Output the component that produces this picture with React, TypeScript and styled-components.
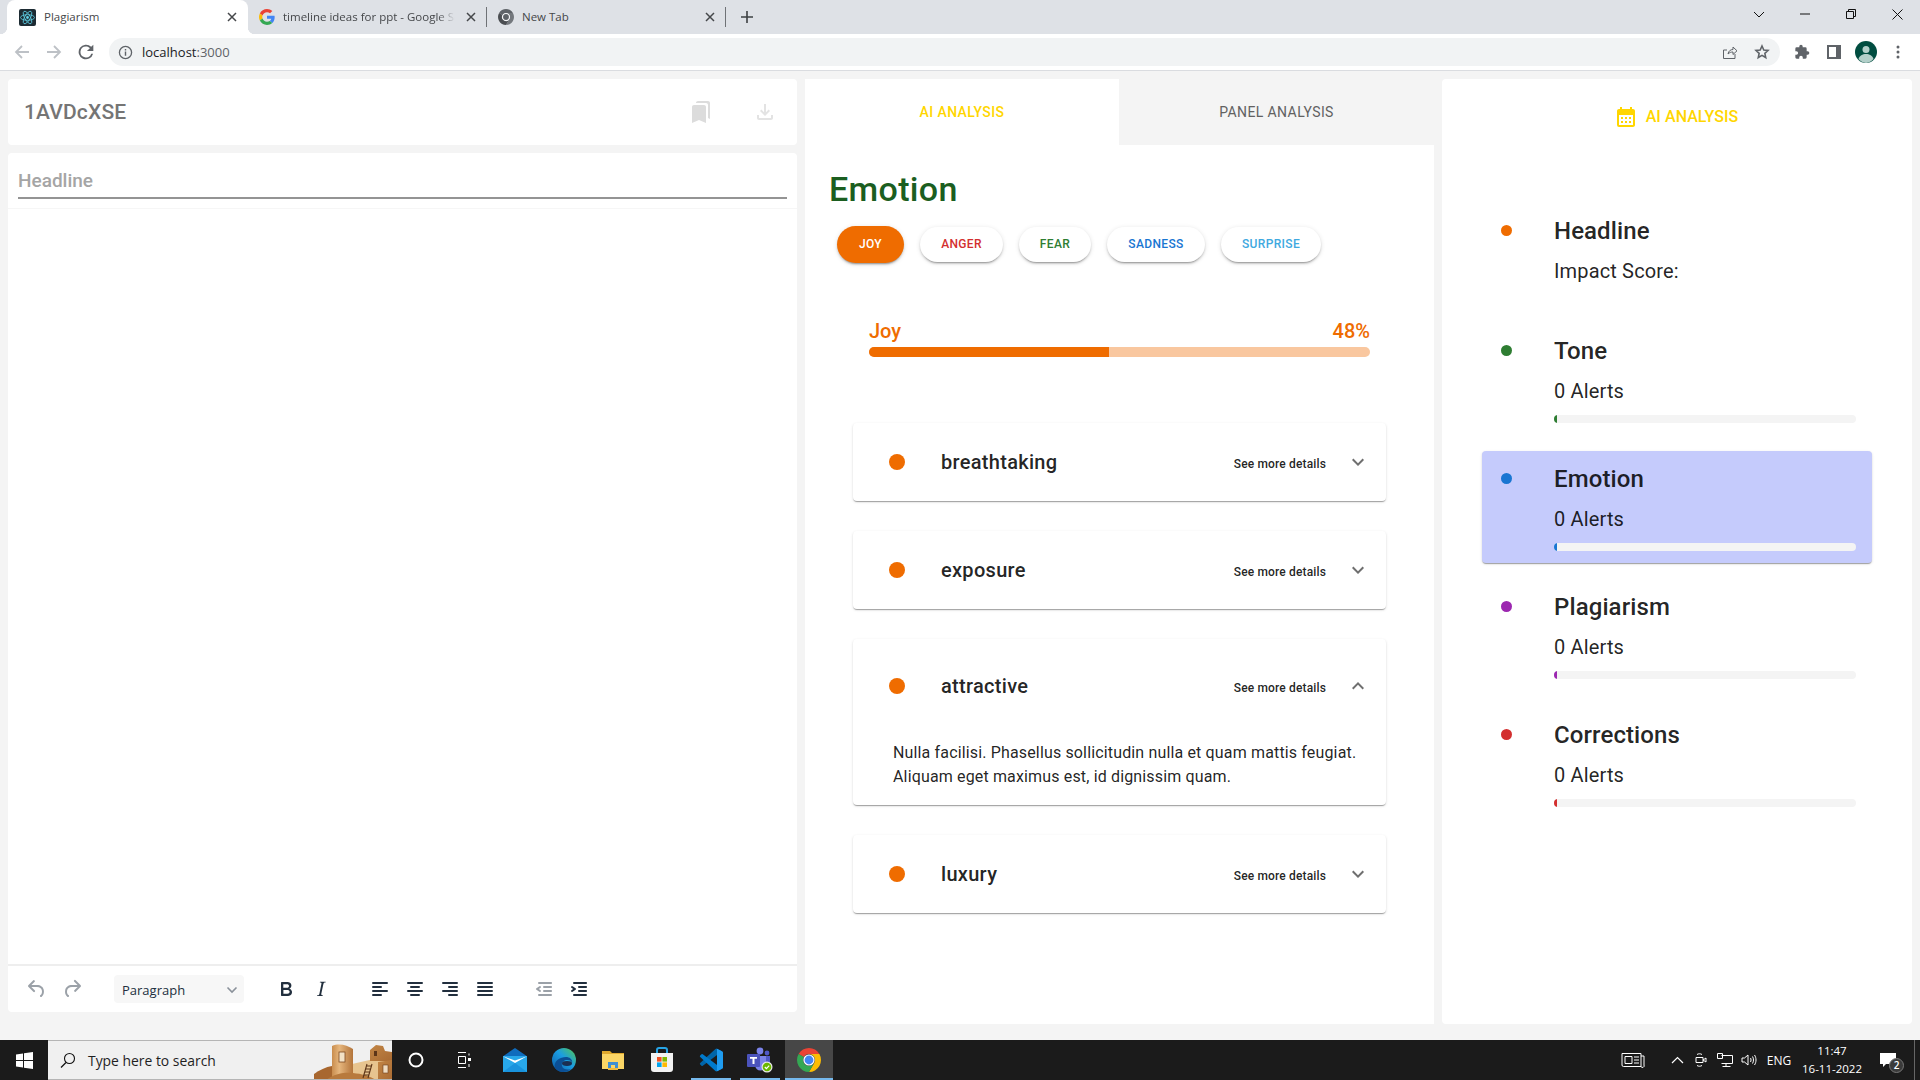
import React from "react";
import styled, { createGlobalStyle } from "styled-components";
import { MdCalendarMonth, MdBookmarks, MdOutlineFileDownload, MdExpandMore, MdExpandLess } from "react-icons/md";

const Global = createGlobalStyle`
  html, body { margin: 0; padding: 0; overflow: hidden; background: #f4f4f4; }
  body { font-family: Roboto, "Liberation Sans", sans-serif; }
  * { box-sizing: border-box; }
  svg { display: block; }
`;

const Page = styled.div`
  width: 1920px; height: 1080px; display: flex; flex-direction: column;
`;

/* browser chrome */
const TabStrip = styled.div`
  height: 34px; flex: none; background: #dee1e6; display: flex; align-items: stretch; padding-left: 7px;
`;
const BrowserTab = styled.div<{ $active?: boolean; $width: number; $sep?: boolean }>`
  width: ${p => p.$width}px; display: flex; align-items: center; gap: 8px;
  padding: 0 8px 0 ${p => (p.$active ? 12 : 11)}px;
  background: ${p => (p.$active ? "#fff" : "transparent")};
  border-radius: ${p => (p.$active ? "8px 8px 0 0" : "0")};
  position: relative;
  &::before {
    content: ""; display: ${p => (p.$active ? "block" : "none")};
    position: absolute; left: -7px; right: -7px; bottom: 0; height: 7px;
    background:
      radial-gradient(circle at 0 0, transparent 7px, #fff 7.5px) left bottom / 7px 7px no-repeat,
      radial-gradient(circle at 100% 0, transparent 7px, #fff 7.5px) right bottom / 7px 7px no-repeat;
  }
  &::after {
    content: ""; display: ${p => (p.$sep ? "block" : "none")};
    position: absolute; right: 0; top: 7px; bottom: 7px; width: 1px; background: #6f7276;
  }
`;
const TabTitle = styled.span<{ $fade?: boolean }>`
  flex: 1; min-width: 0; white-space: nowrap; overflow: hidden; padding-bottom: 2px; line-height: 17px;
  font-family: "Open Sans", sans-serif; font-size: 11.5px; color: #45474a;
  ${p => (p.$fade ? "mask-image: linear-gradient(90deg, #000 90%, transparent 100%);" : "")}
`;
const Glyph = styled.span<{ $size?: number; $color?: string; $mr?: number }>`
  flex: none; width: ${p => p.$size ?? 16}px; height: ${p => p.$size ?? 16}px; margin-right: ${p => p.$mr ?? 0}px;
  display: flex; align-items: center; justify-content: center; color: ${p => p.$color ?? "#45474a"};
`;
const NewTab = styled.div`
  width: 32px; margin-left: 5px; display: flex; align-items: center; justify-content: center; color: #3c4043;
`;
const WindowControls = styled.div`
  margin-left: auto; display: flex; align-items: stretch;
`;
const WindowButton = styled.div`
  width: 46px; display: flex; align-items: center; justify-content: center; color: #111;
  padding-bottom: 6px;
`;
const Toolbar = styled.div`
  height: 37px; flex: none; background: #fff; border-bottom: 1px solid #dadce0;
  display: flex; align-items: center; padding: 0 6px;
`;
const ToolButton = styled.div<{ $color?: string }>`
  width: 32px; height: 28px; flex: none; display: flex; align-items: center; justify-content: center;
  color: ${p => p.$color ?? "#5f6368"};
`;
const Omnibox = styled.div`
  flex: 1; height: 28px; margin: 0 6px 0 7px; border-radius: 14px; background: #f1f3f4;
  display: flex; align-items: center; padding: 0 2px 0 8px;
`;
const Url = styled.div`
  flex: 1; font: 400 13px "Open Sans", sans-serif; color: #202124;
  span { color: #5f6368; }
`;

/* workspace */
const Workspace = styled.main`
  flex: 1; min-height: 0; display: grid; grid-template-columns: 789px 629px 470px; column-gap: 8px;
  padding: 8px 8px 0; background: #f4f4f4; align-items: start;
`;
const LeftColumn = styled.section`
  height: 933px; display: flex; flex-direction: column; gap: 8px;
`;
const DocHeader = styled.header`
  height: 66px; flex: none; background: #fff; border-radius: 4px; display: flex; align-items: center;
  padding: 0 20px 0 16px;
`;
const DocTitle = styled.h1`
  margin: 1px 0 0; flex: 1; font: 500 21px/1.2 Roboto, sans-serif; letter-spacing: .15px; color: #757575;
`;
const DocAction = styled.div<{ $color: string; $gap: number }>`
  color: ${p => p.$color}; margin-left: ${p => p.$gap}px; display: flex; font-size: 24px;
`;
const EditorCard = styled.div`
  flex: 1; min-height: 0; background: #fff; border-radius: 4px; display: flex; flex-direction: column;
`;
const HeadlineWrap = styled.div`
  height: 55px; flex: none; padding: 14px 10px 0;
`;
const HeadlineField = styled.div`
  font: 500 19px/27px Roboto, sans-serif; color: #a5a5a5; padding-bottom: 3px; border-bottom: 2px solid #949494;
`;
const EditorBody = styled.div`
  flex: 1; border-top: 1px solid #f6f6f6;
`;
const EditorToolbar = styled.div`
  height: 48px; flex: none; border-top: 2px solid #eeeeee; display: flex; align-items: center; padding: 0 0 0 17px;
`;
const EditorGroup = styled.div<{ $ml?: number; $gap?: number }>`
  display: flex; align-items: center; gap: ${p => p.$gap ?? 11}px; margin-left: ${p => p.$ml ?? 0}px;
`;
const EditorIcon = styled.div<{ $off?: boolean }>`
  width: 24px; height: 24px; color: ${p => (p.$off ? "rgba(34,47,62,.45)" : "#222f3e")};
`;
const FormatSelect = styled.div`
  width: 130px; height: 28px; margin-left: 30px; border-radius: 4px; background: #f7f7f7; color: #222f3e;
  display: flex; align-items: center; justify-content: space-between; padding: 1px 6px 0 8px;
  font: 400 13px "Open Sans", sans-serif;
`;

const MiddleColumn = styled.section`
  height: 945px; background: #fff; display: flex; flex-direction: column;
`;
const PanelTabs = styled.div`
  height: 66px; flex: none; display: grid; grid-template-columns: 314px 315px;
`;
const PanelTab = styled.div<{ $active?: boolean }>`
  display: flex; align-items: center; justify-content: center; padding-bottom: 1px;
  font: ${p => (p.$active ? 500 : 400)} 14px Roboto, sans-serif; letter-spacing: .4px;
  color: ${p => (p.$active ? "#ffd600" : "#616161")};
  background: ${p => (p.$active ? "#fff" : "#f4f4f4")};
`;
const EmotionTitle = styled.h2`
  margin: 23px 0 16px 24px; font: 500 34px/42px Roboto, sans-serif; letter-spacing: .35px; color: #1b5e20;
`;
const ChipRow = styled.div`
  display: flex; align-items: center; gap: 16px; padding-left: 32px; height: 37px;
`;
const Chip = styled.div<{ $color: string; $active?: boolean; $width: number }>`
  width: ${p => p.$width}px; height: ${p => (p.$active ? 37 : 35)}px; border-radius: 19px;
  display: flex; align-items: center; justify-content: center; padding-bottom: 1px;
  font: 500 12px Roboto, sans-serif; letter-spacing: .35px;
  color: ${p => (p.$active ? "#fff" : p.$color)}; background: ${p => (p.$active ? p.$color : "#fff")};
  box-shadow: 0 3px 1px -2px rgba(0,0,0,.2), 0 2px 2px 0 rgba(0,0,0,.14), 0 1px 5px 0 rgba(0,0,0,.12);
`;
const Meter = styled.div`
  margin: 56px 64px 0;
`;
const MeterLabels = styled.div`
  display: flex; justify-content: space-between; height: 28px; font: 500 20px/24px Roboto, sans-serif; color: #ef6c00;
`;
const MeterTrack = styled.div`
  height: 10px; border-radius: 5px; background: #f9c79f; overflow: hidden;
`;
const MeterFill = styled.div`
  height: 100%; background: #ef6c00;
`;
const AccordionList = styled.div`
  margin: 66px 48px 0; display: flex; flex-direction: column; gap: 30px;
`;
const Accordion = styled.article`
  background: #fff; border-radius: 4px;
  box-shadow: 0 2px 1px -1px rgba(0,0,0,.2), 0 1px 1px 0 rgba(0,0,0,.14), 0 1px 3px 0 rgba(0,0,0,.12);
`;
const AccordionHead = styled.div<{ $open?: boolean }>`
  height: ${p => (p.$open ? 94 : 78)}px; display: flex; align-items: center; padding: 0 16px 0 36px;
`;
const WordDot = styled.span`
  width: 16px; height: 16px; border-radius: 50%; background: #ef6c00; flex: none; margin-right: 36px;
`;
const WordTitle = styled.div`
  flex: 1; font: 500 20px Roboto, sans-serif; letter-spacing: .3px; color: rgba(0,0,0,.87);
`;
const SeeMore = styled.div`
  font: 500 12px Roboto, sans-serif; letter-spacing: .15px; color: rgba(0,0,0,.87); margin: 3px 20px 0 0;
`;
const Chevron = styled.div`
  font-size: 24px; color: #6f6f6f; display: flex;
`;
const AccordionBody = styled.p`
  margin: 0; padding: 8px 24px 16px 40px; font: 400 16px/24px Roboto, sans-serif; letter-spacing: .15px; color: rgba(0,0,0,.87);
`;

const RightColumn = styled.aside`
  height: 945px; background: #fff; border-radius: 4px; padding: 26px 40px 0; display: flex; flex-direction: column;
`;
const SummaryHead = styled.div`
  height: 98px; flex: none; display: flex; justify-content: center; gap: 8px; padding-right: 2px;
  font: 500 16px/24px Roboto, sans-serif; letter-spacing: .05px; color: #ffd600;
  svg { font-size: 24px; }
`;
const SummaryList = styled.div`
  display: flex; flex-direction: column; gap: 16px;
`;
const SummaryItem = styled.div<{ $active?: boolean }>`
  display: flex; align-items: flex-start; gap: 42px; padding: 12px 16px 12px 19px; border-radius: 4px;
  min-height: 104px;
  background: ${p => (p.$active ? "#c5cbfc" : "transparent")};
  box-shadow: ${p => (p.$active ? "0 2px 1px -1px rgba(0,0,0,.2), 0 1px 1px 0 rgba(0,0,0,.14), 0 1px 3px 0 rgba(0,0,0,.12)" : "none")};
`;
const SummaryDot = styled.span<{ $color: string }>`
  width: 11px; height: 11px; border-radius: 50%; flex: none; margin-top: 10px; background: ${p => p.$color};
`;
const SummaryText = styled.div`
  flex: 1; min-width: 0;
`;
const SummaryTitle = styled.div`
  font: 500 24px/32px Roboto, sans-serif; letter-spacing: .1px; color: rgba(0,0,0,.87);
`;
const SummarySub = styled.div`
  margin-top: 8px; font: 400 20px/32px Roboto, sans-serif; letter-spacing: .15px; color: rgba(0,0,0,.87);
`;
const AlertBar = styled.div`
  margin-top: 8px; height: 8px; border-radius: 4px; background: #f4f4f4; overflow: hidden;
`;
const AlertFill = styled.div<{ $color: string }>`
  width: 3px; height: 100%; background: ${p => p.$color};
`;

/* taskbar */
const Taskbar = styled.footer`
  height: 40px; flex: none; background: #1b1b1b; display: flex; align-items: stretch; position: relative;
`;
const StartButton = styled.div`
  width: 48px; display: flex; align-items: center; justify-content: center;
`;
const SearchBox = styled.div`
  width: 344px; background: #f0f0f0; border-top: 1px solid #b5b5b5; border-bottom: 1px solid #b5b5b5;
  display: flex; align-items: center; padding-left: 12px; overflow: hidden;
`;
const SearchText = styled.span`
  margin-left: 12px; font: 400 13.9px "Open Sans", sans-serif; color: #1f1f1f; flex: 1;
`;
const TaskButton = styled.div<{ $mark?: "inset" | "full"; $width?: number; $highlight?: boolean }>`
  width: ${p => p.$width ?? 48}px; display: flex; align-items: center; justify-content: center; position: relative;
  background: ${p => (p.$highlight ? "#474747" : "transparent")};
  &::after {
    content: ""; display: ${p => (p.$mark ? "block" : "none")}; position: absolute; bottom: 0; height: 2px;
    background: #76b9ed; left: ${p => (p.$mark === "inset" ? 4 : 0)}px; right: ${p => (p.$mark === "inset" ? 4 : 0)}px;
  }
`;
const AppRow = styled.div`
  margin-left: 3px; display: flex; gap: 1px;
`;
const Tray = styled.div`
  margin-left: auto; display: flex; align-items: center; height: 100%;
`;
const TrayIcon = styled.div<{ $width: number; $mr?: number }>`
  width: ${p => p.$width}px; margin-right: ${p => p.$mr ?? 0}px; display: flex; justify-content: center; align-items: center;
  color: #fff; font: 400 12px "Open Sans", sans-serif;
`;
const Clock = styled.div`
  width: 70px; text-align: center; color: #fff; font: 400 11.5px/18px "Open Sans", sans-serif;
`;
const NotifyBadge = styled.span`
  position: absolute; right: -8px; bottom: -6px; width: 15px; height: 15px; border-radius: 50%;
  background: #3a3a3a; border: 1px solid #777; color: #fff; font: 600 10px/13px "Open Sans", sans-serif; text-align: center;
`;
const Notify = styled.div`
  position: relative; width: 16px; height: 14px; margin: 0 13px; 
`;
const ShowDesktop = styled.div`
  width: 11px; height: 100%; display: flex; justify-content: center;
  &::before { content: ""; width: 1px; background: #666; }
`;

/* drawings */
const ChromeLogo = ({ size = 24, mono = false }: { size?: number; mono?: boolean }) => (
  <svg width={size} height={size} viewBox="0 0 24 24">
    <path fill={mono ? "#5f6368" : "#ea4335"} d="M22.39 6A12 12 0 0 0 1.61 6L6.8 9A6 6 0 0 1 12 6Z" />
    <path fill={mono ? "#74787d" : "#fbbc04"} d="M22.39 6A12 12 0 0 1 12 24l5.2-9A6 6 0 0 0 12 6Z" />
    <path fill={mono ? "#4b4e52" : "#34a853"} d="M12 24A12 12 0 0 1 1.61 6L6.8 9a6 6 0 0 0 10.4 6Z" />
    <circle cx="12" cy="12" r="5.6" fill="#fff" />
    <circle cx="12" cy="12" r="4.4" fill={mono ? "#5f6368" : "#4285f4"} />
  </svg>
);
const GoogleG = () => (
  <svg width="16" height="16" viewBox="0 0 48 48">
    <path fill="#EA4335" d="M24 9.5c3.54 0 6.71 1.22 9.21 3.6l6.85-6.85C35.9 2.38 30.47 0 24 0 14.62 0 6.51 5.38 2.56 13.22l7.98 6.19C12.43 13.72 17.74 9.5 24 9.5z" />
    <path fill="#4285F4" d="M46.98 24.55c0-1.57-.15-3.09-.38-4.55H24v9.02h12.94c-.58 2.96-2.26 5.48-4.78 7.18l7.73 6c4.51-4.18 7.09-10.36 7.09-17.65z" />
    <path fill="#FBBC05" d="M10.53 28.59c-.48-1.45-.76-2.99-.76-4.59s.27-3.14.76-4.59l-7.98-6.19C.92 16.46 0 20.12 0 24c0 3.88.92 7.54 2.56 10.78l7.97-6.19z" />
    <path fill="#34A853" d="M24 48c6.48 0 11.93-2.13 15.89-5.81l-7.73-6c-2.15 1.45-4.92 2.3-8.16 2.3-6.26 0-11.57-4.22-13.47-9.91l-7.98 6.19C6.51 42.62 14.62 48 24 48z" />
  </svg>
);
const ReactFav = () => (
  <svg width="17" height="17" viewBox="0 0 17 17">
    <rect width="17" height="17" rx="2" fill="#1d2b33" />
    <g fill="none" stroke="#5fd0e6" strokeWidth=".8">
      <ellipse cx="8.5" cy="8.5" rx="7" ry="2.8" />
      <ellipse cx="8.5" cy="8.5" rx="7" ry="2.8" transform="rotate(60 8.5 8.5)" />
      <ellipse cx="8.5" cy="8.5" rx="7" ry="2.8" transform="rotate(120 8.5 8.5)" />
    </g>
    <circle cx="8.5" cy="8.5" r="1.4" fill="#5fd0e6" />
  </svg>
);
const CloseX = ({ color = "currentColor" }: { color?: string }) => (
  <svg width="10" height="10" viewBox="0 0 10 10"><path d="M1 1l8 8M9 1l-8 8" stroke={color} strokeWidth="1.5" /></svg>
);
const ArrowIcon = ({ flip }: { flip?: boolean }) => (
  <svg width="16" height="16" viewBox="0 0 16 16" style={flip ? { transform: "scaleX(-1)" } : undefined}>
    <path d="M15 8H2.500M8 2 2 8l6 6" fill="none" stroke="currentColor" strokeWidth="1.8" />
  </svg>
);
const EI = ({ d }: { d: string }) => (
  <svg width="24" height="24" viewBox="0 0 24 24"><path fill="currentColor" fillRule="evenodd" d={d} /></svg>
);
const bars = (rows: [number, number][]) =>
  rows.map(([x, w], i) => `M${x + 1} ${5 + i * 4}h${w - 2}a1 1 0 0 1 0 2h-${w - 2}a1 1 0 0 1 0-2Z`).join("");

const ICONS = {
  undo: "M6.4 8H12c3.7 0 6.2 2 6.8 5.1.6 2.7-.4 5.6-2.3 6.8a1 1 0 0 1-1-1.8c1.1-.6 1.8-2.7 1.4-4.6-.5-2.1-2.1-3.5-4.9-3.5H6.4l3.3 3.3a1 1 0 1 1-1.4 1.4l-5-5a1 1 0 0 1 0-1.4l5-5a1 1 0 0 1 1.4 1.4L6.4 8Z",
  redo: "M17.6 10H12c-2.8 0-4.4 1.4-4.9 3.5-.4 2 .3 4 1.4 4.6a1 1 0 1 1-1 1.8c-2-1.2-2.9-4.1-2.3-6.8.6-3 3-5.1 6.8-5.1h5.6l-3.3-3.3a1 1 0 1 1 1.4-1.4l5 5a1 1 0 0 1 0 1.4l-5 5a1 1 0 0 1-1.4-1.4l3.3-3.3Z",
  bold: "M7.8 19c-.3 0-.5 0-.6-.2l-.2-.5V5.7c0-.2 0-.4.2-.5l.6-.2h5c1.5 0 2.7.3 3.5 1 .7.6 1.1 1.4 1.1 2.5a3 3 0 0 1-.6 1.9c-.4.6-1 1-1.6 1.2.4.1.9.3 1.3.6s.8.7 1 1.2c.4.4.5 1 .5 1.6 0 1.3-.4 2.3-1.3 3-.8.7-2.1 1-3.8 1H7.8Zm5-8.3c.6 0 1.2-.1 1.6-.5.4-.3.6-.7.6-1.3 0-1.1-.8-1.7-2.3-1.7H9.3v3.5h3.4Zm.5 6c.7 0 1.3-.1 1.7-.4.4-.4.6-.9.6-1.5s-.2-1-.7-1.4c-.4-.3-1-.4-2-.4H9.4v3.8h4Z",
  italic: "M16.7 4.7l-.1.9h-.3c-.6 0-1 0-1.4.3-.3.3-.4.6-.5 1.1l-2.1 9.8v.6c0 .5.4.8 1.4.8h.2l-.2.8H8l.2-.8h.2c1.1 0 1.8-.5 2-1.5l2-9.8.1-.5c0-.6-.4-.8-1.4-.8h-.3l.2-.9h5.8Z",
  left: bars([[4, 16], [4, 10], [4, 16], [4, 10]]),
  center: bars([[4, 16], [7, 10], [4, 16], [7, 10]]),
  right: bars([[4, 16], [10, 10], [4, 16], [10, 10]]),
  justify: bars([[4, 16], [4, 16], [4, 16], [4, 16]]),
  outdent: "M7 5h12c.6 0 1 .4 1 1s-.4 1-1 1H7a1 1 0 1 1 0-2Zm5 4h7c.6 0 1 .4 1 1s-.4 1-1 1h-7a1 1 0 0 1 0-2Zm0 4h7c.6 0 1 .4 1 1s-.4 1-1 1h-7a1 1 0 0 1 0-2Zm-5 4h12a1 1 0 0 1 0 2H7a1 1 0 0 1 0-2Zm1.6-3.8a1 1 0 0 1-1.2 1.6l-3-2a1 1 0 0 1 0-1.6l3-2a1 1 0 0 1 1.2 1.6L6.8 12l1.8 1.2Z",
  indent: "M7 5h12c.6 0 1 .4 1 1s-.4 1-1 1H7a1 1 0 1 1 0-2Zm5 4h7c.6 0 1 .4 1 1s-.4 1-1 1h-7a1 1 0 0 1 0-2Zm0 4h7c.6 0 1 .4 1 1s-.4 1-1 1h-7a1 1 0 0 1 0-2Zm-5 4h12a1 1 0 0 1 0 2H7a1 1 0 0 1 0-2Zm-2.6-3.8L6.2 12l-1.8-1.2a1 1 0 0 1 1.2-1.6l3 2a1 1 0 0 1 0 1.6l-3 2a1 1 0 1 1-1.2-1.6Z",
};

const Pueblo = () => (
  <svg width="78" height="40" viewBox="0 0 78 40" style={{ flex: "none" }}>
    <defs>
      <linearGradient id="tower" x1="0" x2="1" y1="0" y2="0">
        <stop offset="0" stopColor="#c98d4e" /><stop offset=".35" stopColor="#e6b67d" /><stop offset="1" stopColor="#b3743a" />
      </linearGradient>
      <linearGradient id="block" x1="0" x2="1" y1="0" y2="1">
        <stop offset="0" stopColor="#c28545" /><stop offset="1" stopColor="#a96b33" />
      </linearGradient>
    </defs>
    <path fill="#e7c48f" d="M38 24 60 19l18 2v19H38z" />
    <path fill="url(#block)" d="M56 10l6-5 7 1 2 5 7 1v9H56z" />
    <path fill="url(#block)" d="M64 22l14-2v20H64z" />
    <path fill="#a8672f" d="M0 40v-6c5-4 12-7 18-8v14z" />
    <path fill="url(#tower)" d="M18 6c7-3 15-1 21 3v31H18z" />
    <path fill="#b87a3d" d="M12 40c8-6 18-8 27-7 10 1 16 3 23 7z" />
    <rect x="25" y="12" width="6" height="10" fill="#f3e2c6" stroke="#7d4a22" strokeWidth=".8" />
    <rect x="60" y="11" width="3" height="5" fill="#5d3518" />
    <rect x="69" y="25" width="5" height="8" fill="#f0dcc0" stroke="#6e4120" strokeWidth=".6" />
    <path d="M49 38l4-14M54 38l4-14M50 35h5M51 32h5M52 29h5M53 26h5" stroke="#5d3518" strokeWidth="1.1" />
  </svg>
);

const WinLogo = () => (
  <svg width="17" height="17" viewBox="0 0 17 17">
    <path fill="#fff" d="M0 2.4 7 1.4V8H0zM8 1.2 17 0v8H8zM0 9h7v6.6l-7-1zM8 9h9v8l-9-1.2z" />
  </svg>
);
const MailIcon = () => (
  <svg width="24" height="24" viewBox="0 0 24 24">
    <path fill="#0f6cbd" d="M12 0 24 8.2V10H0V8.2z" />
    <rect y="8" width="24" height="16" fill="#28a8ea" />
    <path fill="#fff" d="M0 8.2 12 15 24 8.2 12 12.5z" />
    <path fill="#0f86d3" d="M0 24 12 15 24 24z" opacity=".6" />
  </svg>
);
const EdgeIcon = () => (
  <svg width="24" height="24" viewBox="0 0 24 24">
    <defs>
      <linearGradient id="edge" x1="0" y1="1" x2="1" y2="0"><stop offset="0" stopColor="#0c59a4" /><stop offset=".55" stopColor="#1b9de2" /><stop offset="1" stopColor="#54c94d" /></linearGradient>
    </defs>
    <circle cx="12" cy="12" r="12" fill="url(#edge)" />
    <path fill="#0b4f95" d="M3 20c3 5 12 5 16 1-3 1-8 1-9-3s2-6 5-6 5 1 5 3c1-3-2-6-6-6-7 0-13 5-11 11z" />
    <ellipse cx="15" cy="15.5" rx="5" ry="2.4" fill="#1b2f52" />
  </svg>
);
const FolderIcon = () => (
  <svg width="22" height="22" viewBox="0 0 22 22">
    <path fill="#e0a92e" d="M0 2h8l2 2h12v3H0z" />
    <rect y="5" width="22" height="15" fill="#fbd666" />
    <path fill="#3f8fd2" d="M6 20v-7h10v7h-3v-4H9v4z" />
    <rect x="6" y="19" width="10" height="2" fill="#f0b83a" />
  </svg>
);
const StoreIcon = () => (
  <svg width="24" height="26" viewBox="0 0 24 26">
    <path fill="none" stroke="#27a4e6" strokeWidth="2" d="M7 7V3a2 2 0 0 1 2-2h6a2 2 0 0 1 2 2v4" />
    <path fill="#f2f2f2" d="M1 6h22v16a3 3 0 0 1-3 3H4a3 3 0 0 1-3-3z" />
    <rect x="7" y="10" width="4.6" height="4.6" fill="#f25022" /><rect x="12.4" y="10" width="4.6" height="4.6" fill="#7fba00" />
    <rect x="7" y="15.4" width="4.6" height="4.6" fill="#00a4ef" /><rect x="12.4" y="15.4" width="4.6" height="4.6" fill="#ffb900" />
  </svg>
);
const VsCodeIcon = () => (
  <svg width="24" height="24" viewBox="0 0 24 24">
    <path fill="#0065a9" d="M23 3.3 18 .8a1.4 1.4 0 0 0-1.6.3L1.2 15a1 1 0 0 0 0 1.5l1.3 1.2a1 1 0 0 0 1.3 0L23 3.3z" />
    <path fill="#007acc" d="M23 20.7 18 23.2a1.4 1.4 0 0 1-1.6-.3L1.2 9a1 1 0 0 1 0-1.5l1.3-1.2a1 1 0 0 1 1.3 0L23 20.7z" />
    <path fill="#1f9cf0" d="M18 23.2a1.5 1.5 0 0 1-1.7-.3c.6.6 1.7.2 1.7-.7V1.8c0-.9-1-1.3-1.7-.7.5-.5 1.2-.6 1.7-.3l5 2.4c.6.3 1 .8 1 1.4v14.8c0 .6-.4 1.2-1 1.4z" />
  </svg>
);
const TeamsIcon = () => (
  <svg width="26" height="26" viewBox="0 0 26 26">
    <circle cx="13" cy="4" r="3.4" fill="#7b83eb" /><circle cx="20" cy="6" r="2.4" fill="#5059c9" />
    <path fill="#5059c9" d="M16 9h7v7a3.5 3.5 0 0 1-7 0z" />
    <path fill="#7b83eb" d="M8 9h11v9a5.5 5.5 0 0 1-11 0z" />
    <rect x="0" y="7" width="13" height="13" rx="1" fill="#4b53bc" />
    <path fill="#fff" d="M3 10h7v1.8H7.5V17h-2v-5.2H3z" />
    <circle cx="20" cy="20" r="5.5" fill="#e8e8e8" /><circle cx="20" cy="20" r="4.3" fill="#6bb700" />
    <path d="M17.8 20l1.6 1.6 2.8-3" fill="none" stroke="#fff" strokeWidth="1.2" />
  </svg>
);

const emotions = [
  { label: "JOY", color: "#ef6c00", width: 67, active: true },
  { label: "ANGER", color: "#d32f2f", width: 83 },
  { label: "FEAR", color: "#2e7d32", width: 72 },
  { label: "SADNESS", color: "#1976d2", width: 98 },
  { label: "SURPRISE", color: "#3fa9e0", width: 100 },
];
const words = [
  { word: "breathtaking" },
  { word: "exposure" },
  { word: "attractive", open: true },
  { word: "luxury" },
];
const summary = [
  { title: "Headline", color: "#ef6c00", sub: "Impact Score:", bar: false },
  { title: "Tone", color: "#2e7d32", sub: "0 Alerts", bar: true },
  { title: "Emotion", color: "#1976d2", sub: "0 Alerts", bar: true, active: true },
  { title: "Plagiarism", color: "#9c27b0", sub: "0 Alerts", bar: true },
  { title: "Corrections", color: "#d32f2f", sub: "0 Alerts", bar: true },
];

export default function App() {
  return (
    <Page>
      <Global />
      <TabStrip>
        <BrowserTab $active $width={241}>
          <Glyph $size={17}><ReactFav /></Glyph>
          <TabTitle>Plagiarism</TabTitle>
          <Glyph><CloseX /></Glyph>
        </BrowserTab>
        <BrowserTab $width={239} $sep>
          <Glyph><GoogleG /></Glyph>
          <TabTitle $fade>timeline ideas for ppt - Google Search</TabTitle>
          <Glyph><CloseX /></Glyph>
        </BrowserTab>
        <BrowserTab $width={239} $sep>
          <Glyph><ChromeLogo size={16} mono /></Glyph>
          <TabTitle>New Tab</TabTitle>
          <Glyph><CloseX /></Glyph>
        </BrowserTab>
        <NewTab>
          <svg width="12" height="12" viewBox="0 0 12 12"><path d="M6 0v12M0 6h12" stroke="currentColor" strokeWidth="1.6" /></svg>
        </NewTab>
        <WindowControls>
          <WindowButton><svg width="12" height="7" viewBox="0 0 12 7"><path d="M1 1l5 5 5-5" fill="none" stroke="currentColor" /></svg></WindowButton>
          <WindowButton><svg width="10" height="2" viewBox="0 0 10 2"><path d="M0 1h10" stroke="currentColor" /></svg></WindowButton>
          <WindowButton><svg width="10" height="10" viewBox="0 0 10 10"><path d="M.5 2.5h7v7h-7zM2.5 2.5v-2h7v7h-2" fill="none" stroke="currentColor" /></svg></WindowButton>
          <WindowButton><svg width="11" height="11" viewBox="0 0 11 11"><path d="M.5.5l10 10M10.5.5l-10 10" stroke="currentColor" /></svg></WindowButton>
        </WindowControls>
      </TabStrip>
      <Toolbar>
        <ToolButton $color="#bdc1c6"><ArrowIcon /></ToolButton>
        <ToolButton $color="#bdc1c6"><ArrowIcon flip /></ToolButton>
        <ToolButton>
          <svg width="22" height="22" viewBox="0 0 24 24"><path fill="currentColor" d="M17.65 6.35A8 8 0 1 0 19.73 14h-2.08A6 6 0 1 1 12 6c1.66 0 3.14.69 4.22 1.78L13 11h7V4z" /></svg>
        </ToolButton>
        <Omnibox>
          <Glyph $color="#5f6368" $mr={9}>
            <svg width="15" height="15" viewBox="0 0 16 16"><circle cx="8" cy="8" r="6.5" fill="none" stroke="currentColor" strokeWidth="1.4" /><path d="M8 7v4.5M8 4.3v1.5" stroke="currentColor" strokeWidth="1.5" /></svg>
          </Glyph>
          <Url>localhost<span>:3000</span></Url>
          <ToolButton>
            <svg width="16" height="16" viewBox="0 0 16 16"><path d="M13 10v4.500H1.500V6H5M6 10c.5-3 2.500-4.500 5-4.500V3l4 3.800-4 3.700V8C9 8 7.500 8.500 6 10z" fill="none" stroke="currentColor" /></svg>
          </ToolButton>
          <ToolButton>
            <svg width="16" height="16" viewBox="0 0 24 24"><path fill="none" stroke="currentColor" strokeWidth="2.400" d="M12 3l2.700 6 6.300.7-4.700 4.300 1.300 6.300L12 17l-5.600 3.300L7.700 14 3 9.700 9.300 9z" /></svg>
          </ToolButton>
        </Omnibox>
        <ToolButton>
          <svg width="16" height="16" viewBox="0 0 24 24"><path fill="currentColor" d="M20.500 11H19V7a2 2 0 0 0-2-2h-4V3.500a2.500 2.500 0 0 0-5 0V5H4a2 2 0 0 0-2 2v3.800h1.500a2.700 2.700 0 0 1 0 5.400H2V20a2 2 0 0 0 2 2h3.800v-1.500a2.700 2.700 0 0 1 5.400 0V22H17a2 2 0 0 0 2-2v-4h1.500a2.500 2.500 0 0 0 0-5z" /></svg>
        </ToolButton>
        <ToolButton>
          <svg width="14" height="14" viewBox="0 0 14 14"><path fill="currentColor" fillRule="evenodd" d="M0 0h14v14H0zM2 2v10h7V2z" /></svg>
        </ToolButton>
        <ToolButton>
          <svg width="22" height="22" viewBox="0 0 22 22"><circle cx="11" cy="11" r="11" fill="#004d40" /><circle cx="11" cy="8.500" r="3.500" fill="#b2cfc9" /><path fill="#b2cfc9" d="M3.500 18c1-3.500 4-5 7.500-5s6.500 1.500 7.500 5A11 11 0 0 1 11 22a11 11 0 0 1-7.500-4z" /></svg>
        </ToolButton>
        <ToolButton>
          <svg width="4" height="14" viewBox="0 0 4 14"><circle cx="2" cy="2" r="1.500" fill="currentColor" /><circle cx="2" cy="7" r="1.500" fill="currentColor" /><circle cx="2" cy="12" r="1.500" fill="currentColor" /></svg>
        </ToolButton>
      </Toolbar>

      <Workspace>
        <LeftColumn>
          <DocHeader>
            <DocTitle>1AVDcXSE</DocTitle>
            <DocAction $color="#dcdcdc" $gap={0}><MdBookmarks /></DocAction>
            <DocAction $color="#e3e3e3" $gap={40}><MdOutlineFileDownload /></DocAction>
          </DocHeader>
          <EditorCard>
            <HeadlineWrap><HeadlineField>Headline</HeadlineField></HeadlineWrap>
            <EditorBody />
            <EditorToolbar>
              <EditorGroup $gap={11}>
                <EditorIcon $off><EI d={ICONS.undo} /></EditorIcon>
                <EditorIcon $off><EI d={ICONS.redo} /></EditorIcon>
              </EditorGroup>
              <FormatSelect>
                Paragraph
                <svg width="12" height="8" viewBox="0 0 12 8"><path d="M1.500 1.500 6 6l4.500-4.500" fill="none" stroke="#8a919a" strokeWidth="1.600" /></svg>
              </FormatSelect>
              <EditorGroup $ml={30}>
                <EditorIcon><EI d={ICONS.bold} /></EditorIcon>
                <EditorIcon><EI d={ICONS.italic} /></EditorIcon>
              </EditorGroup>
              <EditorGroup $ml={35}>
                <EditorIcon><EI d={ICONS.left} /></EditorIcon>
                <EditorIcon><EI d={ICONS.center} /></EditorIcon>
                <EditorIcon><EI d={ICONS.right} /></EditorIcon>
                <EditorIcon><EI d={ICONS.justify} /></EditorIcon>
              </EditorGroup>
              <EditorGroup $ml={35}>
                <EditorIcon $off><EI d={ICONS.outdent} /></EditorIcon>
                <EditorIcon><EI d={ICONS.indent} /></EditorIcon>
              </EditorGroup>
            </EditorToolbar>
          </EditorCard>
        </LeftColumn>

        <MiddleColumn>
          <PanelTabs>
            <PanelTab $active>AI ANALYSIS</PanelTab>
            <PanelTab>PANEL ANALYSIS</PanelTab>
          </PanelTabs>
          <EmotionTitle>Emotion</EmotionTitle>
          <ChipRow>
            {emotions.map(e => (
              <Chip key={e.label} $color={e.color} $active={e.active} $width={e.width}>{e.label}</Chip>
            ))}
          </ChipRow>
          <Meter>
            <MeterLabels><span>Joy</span><span>48%</span></MeterLabels>
            <MeterTrack><MeterFill style={{ width: "48%" }} /></MeterTrack>
          </Meter>
          <AccordionList>
            {words.map(w => (
              <Accordion key={w.word}>
                <AccordionHead $open={w.open}>
                  <WordDot />
                  <WordTitle>{w.word}</WordTitle>
                  <SeeMore>See more details</SeeMore>
                  <Chevron>{w.open ? <MdExpandLess /> : <MdExpandMore />}</Chevron>
                </AccordionHead>
                {w.open && (
                  <AccordionBody>
                    Nulla facilisi. Phasellus sollicitudin nulla et quam mattis feugiat. Aliquam eget maximus est, id dignissim quam.
                  </AccordionBody>
                )}
              </Accordion>
            ))}
          </AccordionList>
        </MiddleColumn>

        <RightColumn>
          <SummaryHead><MdCalendarMonth /><span>AI ANALYSIS</span></SummaryHead>
          <SummaryList>
            {summary.map(s => (
              <SummaryItem key={s.title} $active={s.active}>
                <SummaryDot $color={s.color} />
                <SummaryText>
                  <SummaryTitle>{s.title}</SummaryTitle>
                  <SummarySub>{s.sub}</SummarySub>
                  {s.bar && <AlertBar><AlertFill $color={s.color} /></AlertBar>}
                </SummaryText>
              </SummaryItem>
            ))}
          </SummaryList>
        </RightColumn>
      </Workspace>

      <Taskbar>
        <StartButton><WinLogo /></StartButton>
        <SearchBox>
          <svg width="16" height="16" viewBox="0 0 16 16"><circle cx="9.500" cy="6.500" r="5" fill="none" stroke="#111" strokeWidth="1.100" /><path d="M6 10.500l-5 5" stroke="#111" strokeWidth="1.300" /></svg>
          <SearchText>Type here to search</SearchText>
          <Pueblo />
        </SearchBox>
        <TaskButton>
          <svg width="16" height="16" viewBox="0 0 16 16"><circle cx="8" cy="8" r="6.500" fill="none" stroke="#fff" strokeWidth="2" /></svg>
        </TaskButton>
        <TaskButton>
          <svg width="16" height="16" viewBox="0 0 16 16"><path d="M2 .5h8M2 15.500h8M2.500 4.500h7v7h-7zM13 1.500v2M13 12v3" fill="none" stroke="#fff" /><rect x="12" y="6" width="3" height="3" fill="#fff" /></svg>
        </TaskButton>
        <AppRow>
          <TaskButton><MailIcon /></TaskButton>
          <TaskButton><EdgeIcon /></TaskButton>
          <TaskButton><FolderIcon /></TaskButton>
          <TaskButton><StoreIcon /></TaskButton>
          <TaskButton $mark="inset"><VsCodeIcon /></TaskButton>
          <TaskButton $mark="inset"><TeamsIcon /></TaskButton>
          <TaskButton $mark="full" $highlight><ChromeLogo /></TaskButton>
        </AppRow>
        <Tray>
          <TrayIcon $width={32} $mr={16}>
            <svg width="24" height="16" viewBox="0 0 24 16"><path d="M1 1.500h19v13H2.500A1.500 1.500 0 0 1 1 13zM20 4h3v9a1.500 1.500 0 0 1-3 1.500M4 4.500h7v7H4zM13 5h5M13 8h5M13 11h5" fill="none" stroke="#fff" /></svg>
          </TrayIcon>
          <TrayIcon $width={24}>
            <svg width="13" height="8" viewBox="0 0 13 8"><path d="M1 7l5.500-5.500L12 7" fill="none" stroke="#fff" strokeWidth="1.200" /></svg>
          </TrayIcon>
          <TrayIcon $width={24}>
            <svg width="12" height="16" viewBox="0 0 12 16"><path d="M1 5.500h7v5H1zM8 8l3-2v4zM2 2.500c1.500-1 3.500-1 5 0M2 13.500c1.500 1 3.500 1 5 0" fill="none" stroke="#fff" /></svg>
          </TrayIcon>
          <TrayIcon $width={24}>
            <svg width="16" height="15" viewBox="0 0 16 15"><path d="M4.500 2.500h11v8h-11M9 10.500v3M5.500 13.500h8M.5.500h5v5h-5z" fill="none" stroke="#fff" /></svg>
          </TrayIcon>
          <TrayIcon $width={24}>
            <svg width="16" height="14" viewBox="0 0 16 14"><path d="M1 5h2.500L7 2v10L3.500 9H1zM9.500 5c.7 1.200.7 2.800 0 4M11.500 3.500c1.300 2 1.300 5 0 7M13.500 2c2 3 2 7 0 10" fill="none" stroke="#fff" /></svg>
          </TrayIcon>
          <TrayIcon $width={36}>ENG</TrayIcon>
          <Clock>11:47<br />16-11-2022</Clock>
          <Notify>
            <svg width="16" height="14" viewBox="0 0 16 14"><path fill="#fff" d="M0 0h16v11H6l-3 3v-3H0z" /></svg>
            <NotifyBadge>2</NotifyBadge>
          </Notify>
          <ShowDesktop />
        </Tray>
      </Taskbar>
    </Page>
  );
}
